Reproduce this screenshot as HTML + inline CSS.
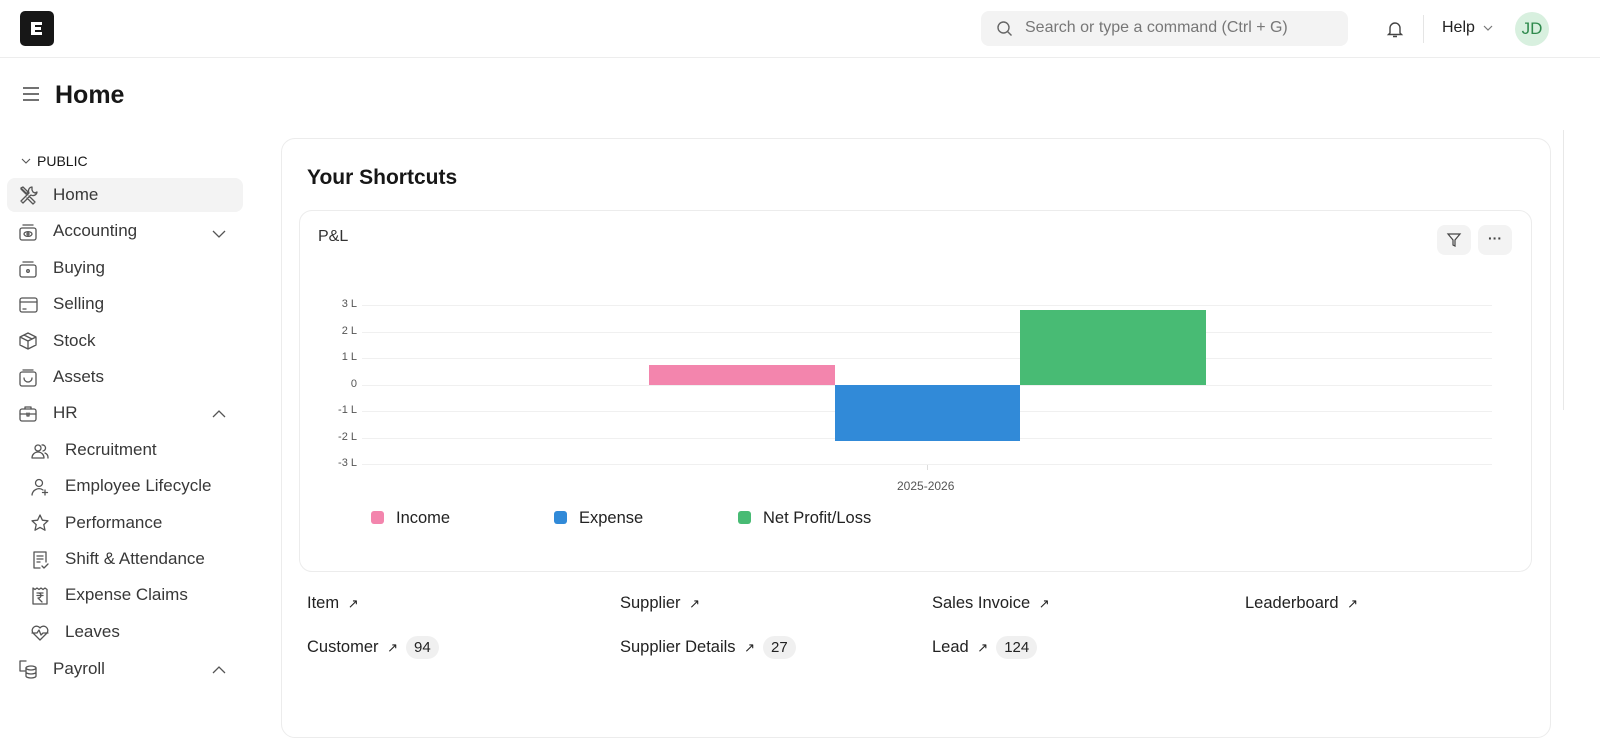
<!DOCTYPE html>
<html><head><meta charset="utf-8"><style>
*{box-sizing:border-box;margin:0;padding:0}
body{width:1600px;height:697px;overflow:hidden;background:#fff;font-family:"Liberation Sans",sans-serif;color:#1f272e;position:relative}
.abs{position:absolute}
.nav{font-size:17px;color:#383838}
.ic{position:absolute;width:20px;height:20px}
.ic svg{width:20px;height:20px;fill:none;stroke:#555;stroke-width:1.3;stroke-linecap:round;stroke-linejoin:round}
.sc{position:absolute;font-size:16.5px;color:#222}
.badge{display:inline-block;background:#f0f0f0;border-radius:12px;padding:3px 8px;margin-left:8px;font-size:15px}
.ax{position:absolute;font-size:11px;color:#555;text-align:right;width:30px}
.grid{position:absolute;left:362px;width:1130px;height:1px;background:#f0f0f0}
.lg{position:absolute;font-size:16.5px;color:#222}
</style></head><body>
<div class="abs" style="left:20px;top:11px;width:34px;height:35px;background:#171717;border-radius:5px"></div>
<svg class="abs" style="left:28px;top:19px" width="18" height="19"><path d="M3 3h11v3H7v2h6v3H7v2h7v3H3z" fill="#fff"/></svg>
<div class="abs" style="left:0;top:57px;width:1600px;height:1px;background:#ededed"></div>
<div class="abs" style="left:981px;top:11px;width:367px;height:35px;background:#f3f3f3;border-radius:8px"></div>
<svg class="abs" style="left:996px;top:20px" width="18" height="18" fill="none" stroke="#666" stroke-width="1.4"><circle cx="7.5" cy="7.5" r="5.5"/><path d="M11.5 11.5l4 4"/></svg>
<div class="abs" style="left:1025px;top:19px;font-size:16px;color:#777">Search or type a command (Ctrl + G)</div>
<svg class="abs" style="left:1385px;top:19px" width="20" height="20" fill="none" stroke="#444" stroke-width="1.4"><path d="M5 14V9a5 5 0 0 1 10 0v5l1.5 1.5h-13z M8 17.5h4"/></svg>
<div class="abs" style="left:1423px;top:15px;width:1px;height:28px;background:#e5e5e5"></div>
<div class="abs" style="left:1442px;top:19px;font-size:16px;color:#222">Help</div>
<svg class="abs" style="left:1482px;top:24px" width="12" height="8" fill="none" stroke="#777" stroke-width="1.2"><path d="M2 2l4 4 4-4"/></svg>
<div class="abs" style="left:1515px;top:12px;width:34px;height:34px;border-radius:50%;background:#d8f0df;color:#2f8a4d;font-size:17px;text-align:center;line-height:34px">JD</div>
<svg class="abs" style="left:22px;top:86px" width="18" height="16" stroke="#444" stroke-width="1.4"><path d="M1 2h16M1 8h16M1 14h16"/></svg>
<div class="abs" style="left:55px;top:81px;font-size:25px;font-weight:bold;color:#171717">Home</div>
<svg class="abs" style="left:20px;top:157px" width="12" height="8" fill="none" stroke="#555" stroke-width="1.1"><path d="M2 2l4 4 4-4"/></svg>
<div class="abs" style="left:37px;top:153px;font-size:14px;color:#171717">PUBLIC</div>
<div class="abs" style="left:7px;top:178px;width:236px;height:34px;background:#f3f3f3;border-radius:8px"></div>
<div class="ic" style="left:18px;top:185px"><svg viewBox="0 0 20 20"><path d="M3 3l6 6M3 3l2-1 5 5-2 2-5-5z M11 11l6 6-2 2-6-6 M14 2a4 4 0 0 0-3 6l-8 8 2 2 8-8a4 4 0 0 0 6-3l-2 1-2-1-1-2z"/></svg></div>
<div class="abs nav" style="left:53px;top:185px">Home</div>
<div class="ic" style="left:18px;top:222px"><svg viewBox="0 0 20 20"><rect x="2" y="6" width="16" height="12" rx="2"/><path d="M5 3h10"/><ellipse cx="10" cy="12" rx="4" ry="2.3"/><circle cx="10" cy="12" r="1"/></svg></div>
<div class="abs nav" style="left:53px;top:221px">Accounting</div>
<svg class="abs" style="left:211px;top:229px" width="16" height="10" fill="none" stroke="#555" stroke-width="1.3"><path d="M2 2l6 6 6-6"/></svg>
<div class="ic" style="left:18px;top:259px"><svg viewBox="0 0 20 20"><rect x="2" y="6" width="16" height="12" rx="2"/><path d="M5 3h10"/><circle cx="10" cy="12" r="1.3"/></svg></div>
<div class="abs nav" style="left:53px;top:258px">Buying</div>
<div class="ic" style="left:18px;top:295px"><svg viewBox="0 0 20 20"><rect x="2" y="3" width="17" height="14" rx="2"/><path d="M2 7h17M5 14h3"/></svg></div>
<div class="abs nav" style="left:53px;top:294px">Selling</div>
<div class="ic" style="left:18px;top:331px"><svg viewBox="0 0 20 20"><path d="M10 2l8 4v8l-8 4-8-4V6z M2 6l8 4 8-4 M10 10v8 M6 4l8 4"/></svg></div>
<div class="abs nav" style="left:53px;top:331px">Stock</div>
<div class="ic" style="left:18px;top:368px"><svg viewBox="0 0 20 20"><rect x="2" y="4" width="16" height="14" rx="2"/><path d="M5 2h10M6 10a4 4 0 0 0 8 0"/></svg></div>
<div class="abs nav" style="left:53px;top:367px">Assets</div>
<div class="ic" style="left:18px;top:404px"><svg viewBox="0 0 20 20"><rect x="2" y="5" width="16" height="12" rx="2"/><path d="M7 5V3h6v2M2 10h16M9 9v3h2V9"/></svg></div>
<div class="abs nav" style="left:53px;top:403px">HR</div>
<svg class="abs" style="left:211px;top:409px" width="16" height="10" fill="none" stroke="#555" stroke-width="1.3"><path d="M2 8l6-6 6 6"/></svg>
<div class="ic" style="left:30px;top:441px"><svg viewBox="0 0 20 20"><circle cx="8" cy="7" r="3"/><path d="M2 17a6 6 0 0 1 12 0z M12 4a3 3 0 0 1 1 6 M15 12a5 5 0 0 1 3 5"/></svg></div>
<div class="abs nav" style="left:65px;top:440px">Recruitment</div>
<div class="ic" style="left:30px;top:477px"><svg viewBox="0 0 20 20"><circle cx="9" cy="6" r="3.5"/><path d="M2 18a7 7 0 0 1 11-5 M15 13v5M12.5 15.5h5"/></svg></div>
<div class="abs nav" style="left:65px;top:476px">Employee Lifecycle</div>
<div class="ic" style="left:30px;top:513px"><svg viewBox="0 0 20 20"><path d="M10 2l2.4 5.2 5.6.6-4.2 3.8 1.2 5.6L10 14.4l-5 2.8 1.2-5.6L2 7.8l5.6-.6z"/></svg></div>
<div class="abs nav" style="left:65px;top:513px">Performance</div>
<div class="ic" style="left:30px;top:550px"><svg viewBox="0 0 20 20"><path d="M10 18H4V2h12v10M7 6h6M7 9h6M7 12h3M12 16l2 2 4-4"/></svg></div>
<div class="abs nav" style="left:65px;top:549px">Shift &amp; Attendance</div>
<div class="ic" style="left:30px;top:586px"><svg viewBox="0 0 20 20"><path d="M3 2l2 1.5L7 2l2 1.5L11 2l2 1.5L15 2l2 1.5V18H3z M7 7h6M7 9.5h6M8 7c4 0 4 5 0 5l4 4"/></svg></div>
<div class="abs nav" style="left:65px;top:585px">Expense Claims</div>
<div class="ic" style="left:30px;top:623px"><svg viewBox="0 0 20 20"><path d="M10 17l-7-7a4 4 0 0 1 7-5 4 4 0 0 1 7 5z M2 10h5l2-3 2 5 2-2h5"/></svg></div>
<div class="abs nav" style="left:65px;top:622px">Leaves</div>
<div class="ic" style="left:18px;top:659px"><svg viewBox="0 0 20 20"><path d="M8 2H2v10h5"/><ellipse cx="13" cy="9" rx="5" ry="2"/><path d="M8 9v8c0 1 2 2 5 2s5-1 5-2V9M8 13c0 1 2 2 5 2s5-1 5-2"/></svg></div>
<div class="abs nav" style="left:53px;top:659px">Payroll</div>
<svg class="abs" style="left:211px;top:665px" width="16" height="10" fill="none" stroke="#555" stroke-width="1.3"><path d="M2 8l6-6 6 6"/></svg>
<div class="abs" style="left:281px;top:138px;width:1270px;height:600px;border:1px solid #ececec;border-radius:14px"></div>
<div class="abs" style="left:1563px;top:130px;width:1px;height:280px;background:#e8e8e8"></div>
<div class="abs" style="left:307px;top:166px;font-size:21px;font-weight:bold;color:#171717">Your Shortcuts</div>
<div class="abs" style="left:299px;top:210px;width:1233px;height:362px;border:1px solid #ececec;border-radius:13px"></div>
<div class="abs" style="left:318px;top:228px;font-size:16px;color:#333">P&amp;L</div>
<div class="abs" style="left:1437px;top:225px;width:34px;height:30px;background:#f3f3f3;border-radius:8px"></div>
<svg class="abs" style="left:1446px;top:232px" width="16" height="16" fill="none" stroke="#444" stroke-width="1.2"><path d="M2 2h12l-5 6v6l-2-1V8z"/></svg>
<div class="abs" style="left:1478px;top:225px;width:34px;height:30px;background:#f3f3f3;border-radius:8px;text-align:center;font-size:14px;line-height:26px;color:#444;font-weight:bold">···</div>
<div class="grid" style="top:305px"></div><div class="grid" style="top:332px"></div><div class="grid" style="top:358px"></div><div class="grid" style="top:385px"></div><div class="grid" style="top:411px"></div><div class="grid" style="top:438px"></div><div class="grid" style="top:464px"></div>
<div class="ax" style="left:327px;top:298px">3 L</div><div class="ax" style="left:327px;top:325px">2 L</div><div class="ax" style="left:327px;top:351px">1 L</div><div class="ax" style="left:327px;top:378px">0</div><div class="ax" style="left:327px;top:404px">-1 L</div><div class="ax" style="left:327px;top:431px">-2 L</div><div class="ax" style="left:327px;top:457px">-3 L</div>
<div class="abs" style="left:649px;top:365px;width:186px;height:20px;background:#f385ad"></div>
<div class="abs" style="left:835px;top:385px;width:185px;height:56px;background:#318ad8"></div>
<div class="abs" style="left:1020px;top:310px;width:186px;height:75px;background:#48bb74"></div>
<div class="abs" style="left:927px;top:465px;width:1px;height:5px;background:#ddd"></div>
<div class="abs" style="left:897px;top:479px;font-size:12px;color:#555">2025-2026</div>
<div class="abs" style="left:371px;top:511px;width:13px;height:13px;border-radius:3px;background:#f385ad"></div>
<div class="lg" style="left:396px;top:509px">Income</div>
<div class="abs" style="left:554px;top:511px;width:13px;height:13px;border-radius:3px;background:#318ad8"></div>
<div class="lg" style="left:579px;top:509px">Expense</div>
<div class="abs" style="left:738px;top:511px;width:13px;height:13px;border-radius:3px;background:#48bb74"></div>
<div class="lg" style="left:763px;top:509px">Net Profit/Loss</div>
<div class="sc" style="left:307px;top:594px">Item <span style="font-size:13px;margin-left:4px">↗</span></div>
<div class="sc" style="left:620px;top:594px">Supplier <span style="font-size:13px;margin-left:4px">↗</span></div>
<div class="sc" style="left:932px;top:594px">Sales Invoice <span style="font-size:13px;margin-left:4px">↗</span></div>
<div class="sc" style="left:1245px;top:594px">Leaderboard <span style="font-size:13px;margin-left:4px">↗</span></div>
<div class="sc" style="left:307px;top:636px">Customer <span style="font-size:13px;margin-left:4px">↗</span><span class="badge">94</span></div>
<div class="sc" style="left:620px;top:636px">Supplier Details <span style="font-size:13px;margin-left:4px">↗</span><span class="badge">27</span></div>
<div class="sc" style="left:932px;top:636px">Lead <span style="font-size:13px;margin-left:4px">↗</span><span class="badge">124</span></div>
</body></html>
